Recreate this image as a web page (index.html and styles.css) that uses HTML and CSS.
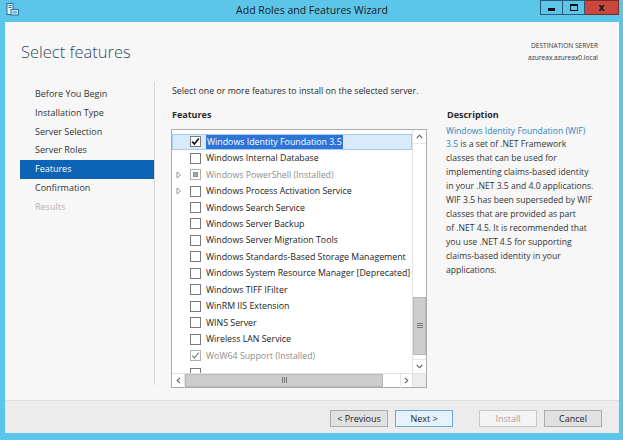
FILE: index.html
```html
<!DOCTYPE html>
<html>
<head>
<meta charset="utf-8">
<title>Add Roles and Features Wizard</title>
<link rel="stylesheet" href="styles.css">
</head>
<body>
<div class="window">
  <div class="titlebar">
    <div class="tb-left">
      <svg class="app-icon" width="13" height="13" viewBox="0 0 13 13">
        <rect x="1" y="0.5" width="6" height="11" fill="#e8f4fb" stroke="#2d6f9c"/>
        <rect x="2.5" y="2" width="3" height="1" fill="#2d6f9c"/>
        <rect x="2.5" y="4" width="3" height="1" fill="#2d6f9c"/>
        <rect x="5" y="6.5" width="7.5" height="5.5" fill="#dfeef8" stroke="#2d6f9c"/>
        <rect x="6.5" y="8" width="4.5" height="2.5" fill="#6fb3de"/>
      </svg>
    </div>
    <div class="tb-title">Add Roles and Features Wizard</div>
    <div class="tb-controls">
      <div class="ctl ctl-min"><span class="min-glyph"></span></div>
      <div class="ctl ctl-max"><span class="max-glyph"></span></div>
      <div class="ctl ctl-close">x</div>
    </div>
  </div>

  <div class="client">
    <div class="header">
      <h1 class="page-title">Select features</h1>
      <div class="dest">
        <div>DESTINATION SERVER</div>
        <div>azureax.azureax0.local</div>
      </div>
    </div>

    <div class="main">
      <nav class="steps">
        <div class="step">Before You Begin</div>
        <div class="step">Installation Type</div>
        <div class="step">Server Selection</div>
        <div class="step">Server Roles</div>
        <div class="step step-active">Features</div>
        <div class="step">Confirmation</div>
        <div class="step step-disabled">Results</div>
      </nav>

      <div class="content">
        <p class="intro">Select one or more features to install on the selected server.</p>
        <div class="columns">
          <div class="features">
            <div class="col-title">Features</div>
            <div class="listbox">
              <div class="rows">
                <div class="row row-selected"><span class="exp"></span><span class="cb"><svg width="9" height="9" viewBox="0 0 9 9"><path d="M1.2 4.6 L3.4 7 L7.8 1.6" fill="none" stroke="#111" stroke-width="1.6"/></svg></span><span class="label"><span class="sel-text">Windows Identity Foundation 3.5</span></span></div>
                <div class="row"><span class="exp"></span><span class="cb"></span><span class="label">Windows Internal Database</span></div>
                <div class="row row-installed"><span class="exp"><svg width="6" height="8" viewBox="0 0 6 8"><path d="M1 1 L4.5 4 L1 7 Z" fill="none" stroke="#9a9a9a" stroke-width="1"/></svg></span><span class="cb cb-partial"><span class="partial-fill"></span></span><span class="label">Windows PowerShell (Installed)</span></div>
                <div class="row"><span class="exp"><svg width="6" height="8" viewBox="0 0 6 8"><path d="M1 1 L4.5 4 L1 7 Z" fill="none" stroke="#9a9a9a" stroke-width="1"/></svg></span><span class="cb"></span><span class="label">Windows Process Activation Service</span></div>
                <div class="row"><span class="exp"></span><span class="cb"></span><span class="label">Windows Search Service</span></div>
                <div class="row"><span class="exp"></span><span class="cb"></span><span class="label">Windows Server Backup</span></div>
                <div class="row"><span class="exp"></span><span class="cb"></span><span class="label">Windows Server Migration Tools</span></div>
                <div class="row"><span class="exp"></span><span class="cb"></span><span class="label">Windows Standards-Based Storage Management</span></div>
                <div class="row"><span class="exp"></span><span class="cb"></span><span class="label">Windows System Resource Manager [Deprecated]</span></div>
                <div class="row"><span class="exp"></span><span class="cb"></span><span class="label">Windows TIFF IFilter</span></div>
                <div class="row"><span class="exp"></span><span class="cb"></span><span class="label">WinRM IIS Extension</span></div>
                <div class="row"><span class="exp"></span><span class="cb"></span><span class="label">WINS Server</span></div>
                <div class="row"><span class="exp"></span><span class="cb"></span><span class="label">Wireless LAN Service</span></div>
                <div class="row row-installed"><span class="exp"></span><span class="cb cb-installed"><svg width="9" height="9" viewBox="0 0 9 9"><path d="M1.2 4.6 L3.4 7 L7.8 1.6" fill="none" stroke="#8a8a8a" stroke-width="1.3"/></svg></span><span class="label">WoW64 Support (Installed)</span></div>
                <div class="row row-partial"><span class="exp"></span><span class="cb"></span></div>
              </div>
              <div class="vscroll">
                <div class="sb-btn sb-up"><svg width="7" height="5" viewBox="0 0 7 5"><path d="M0.8 4 L3.5 1.2 L6.2 4" fill="none" stroke="#606060" stroke-width="1.1"/></svg></div>
                <div class="v-track"><div class="v-thumb"><span class="grip-v"></span></div></div>
                <div class="sb-btn sb-down"><svg width="7" height="5" viewBox="0 0 7 5"><path d="M0.8 1 L3.5 3.8 L6.2 1" fill="none" stroke="#606060" stroke-width="1.1"/></svg></div>
              </div>
              <div class="hscroll">
                <div class="sb-btn sb-left"><svg width="5" height="7" viewBox="0 0 5 7"><path d="M4 0.8 L1.2 3.5 L4 6.2" fill="none" stroke="#606060" stroke-width="1.1"/></svg></div>
                <div class="h-thumb"><span class="grip-h"></span></div>
                <div class="h-track"></div>
                <div class="sb-btn sb-right"><svg width="5" height="7" viewBox="0 0 5 7"><path d="M1 0.8 L3.8 3.5 L1 6.2" fill="none" stroke="#606060" stroke-width="1.1"/></svg></div>
              </div>
              <div class="corner"></div>
            </div>
          </div>
          <div class="desc">
            <div class="col-title">Description</div>
            <p class="desc-text"><span class="desc-link">Windows Identity Foundation (WIF)<br>3.5</span> is a set of .NET Framework<br>classes that can be used for<br>implementing claims-based identity<br>in your .NET 3.5 and 4.0 applications.<br>WIF 3.5 has been superseded by WIF<br>classes that are provided as part<br>of .NET 4.5. It is recommended that<br>you use .NET 4.5 for supporting<br>claims-based identity in your<br>applications.</p>
          </div>
        </div>
      </div>
    </div>

    <div class="footer">
      <button class="btn">&lt; Previous</button>
      <button class="btn btn-default">Next &gt;</button>
      <button class="btn btn-disabled btn-install">Install</button>
      <button class="btn">Cancel</button>
    </div>
  </div>
</div>
</body>
</html>
```

FILE: styles.css
```css
* { box-sizing: border-box; }
html, body { margin: 0; padding: 0; }
body {
  width: 623px;
  height: 440px;
  overflow: hidden;
  font-family: "Open Sans", "Noto Sans", "DejaVu Sans", sans-serif;
  color: #2b2b2b;
  background: #5cc6ea;
}
.window {
  width: 623px;
  height: 440px;
  display: flex;
  flex-direction: column;
  padding: 0 4px 7px 5px;
  background: #5cc6ea;
}

/* title bar */
.titlebar {
  height: 22px;
  flex: none;
  display: grid;
  grid-template-columns: 1fr auto 1fr;
  align-items: start;
}
.tb-left { padding: 3px 0 0 1px; }
.app-icon { display: block; }
.tb-title {
  font-size: 10.5px;
  line-height: 20px;
  color: #1a1a1a;
}
.tb-controls {
  justify-self: end;
  display: flex;
  height: 15px;
}
.ctl {
  height: 15px;
  border: 1px solid #2a5a78;
  display: flex;
  align-items: center;
  justify-content: center;
}
.ctl-min { width: 23px; background: #5cc6ea; }
.ctl-max { width: 22px; background: #5cc6ea; border-left: none; }
.ctl-close {
  width: 34px;
  background: #c9473e;
  border-color: #7a2b26;
  border-left: none;
  font-family: "DejaVu Sans", sans-serif;
  font-weight: bold;
  font-size: 10px;
  line-height: 12px;
  color: #1a1a1a;
}
.min-glyph { width: 7px; height: 3px; background: #111; margin-top: 3px; }
.max-glyph { width: 8px; height: 7px; border: 1px solid #111; border-top-width: 2px; }

/* client */
.client {
  flex: 1;
  display: flex;
  flex-direction: column;
  background: #f7f7f7;
}
.header {
  height: 60px;
  flex: none;
  display: flex;
  justify-content: space-between;
  padding: 0 21px 0 16px;
}
.page-title {
  margin: 0;
  padding-top: 20px;
  font-size: 16.5px;
  line-height: 20px;
  font-weight: 300;
  color: #2f4d63;
}
.dest {
  padding-top: 18px;
  font-size: 6.6px;
  line-height: 12px;
  text-align: right;
  color: #333;
}

.main {
  flex: 1;
  display: flex;
  min-height: 0;
}
.steps {
  width: 150px;
  flex: none;
  padding: 3px 0 0 15px;
  border-right: 1px solid #d6d6d6;
  margin-bottom: 15px;
}
.step {
  height: 18.8px;
  line-height: 18.8px;
  padding-left: 15px;
  font-size: 9px;
  color: #333;
}
.step-active { background: #0d63b6; color: #fff; }
.step-disabled { color: #b5b5b5; }

.content {
  flex: 1;
  padding-left: 16px;
}
.intro {
  margin: 0;
  padding-top: 1.5px;
  font-size: 8.8px;
  line-height: 14px;
  padding-left: 1px;
}
.columns {
  display: flex;
  gap: 19px;
}
.col-title {
  margin-top: 10px;
  font-size: 9px;
  line-height: 14px;
  font-weight: 700;
  padding-left: 1px;
  margin-bottom: 7px;
}
.features { width: 256px; flex: none; }
.listbox {
  width: 256px;
  height: 259px;
  border: 1px solid #acacac;
  background: #fff;
  display: grid;
  grid-template-columns: 1fr 14px;
  grid-template-rows: 1fr 14px;
}
.rows {
  overflow: hidden;
  padding-top: 4px;
}
.row {
  height: 16.46px;
  display: flex;
  align-items: center;
  padding-left: 3px;
  font-size: 8.8px;
  color: #222;
  white-space: nowrap;
}
.row-selected {
  background: #d9eafa;
  border: 1px solid #a6cbef;
  padding-left: 2px;
}
.row-partial { align-items: flex-start; padding-top: 4px; }
.exp {
  width: 13px;
  flex: none;
  display: flex;
  align-items: center;
  padding-left: 1px;
}
.exp svg { display: block; }
.cb {
  width: 11px;
  height: 11px;
  flex: none;
  margin-left: 2px;
  border: 1px solid #7a7a7a;
  background: #fff;
  display: flex;
  align-items: center;
  justify-content: center;
}
.cb svg { display: block; }
.cb-installed { border-color: #b0b0b0; }
.cb-partial { border-color: #b0b0b0; }
.partial-fill { width: 5px; height: 5px; background: #a8a8a8; border: 1px solid #8c8c8c; }
.label { margin-left: 5px; }
.sel-text {
  background: #2d74d6;
  color: #fff;
  padding: 1px 1px;
}
.row-installed .label { color: #8d8d8d; }

.vscroll {
  display: flex;
  flex-direction: column;
  border-left: 1px solid #e2e2e2;
  background: #fff;
}
.sb-btn {
  height: 14px;
  flex: none;
  display: flex;
  align-items: center;
  justify-content: center;
}
.sb-btn svg { display: block; }
.sb-up { border-bottom: 1px solid #e6e6e6; }
.sb-down { border-top: 1px solid #e6e6e6; }
.v-track { flex: 1; }
.v-thumb {
  margin-top: 153px;
  height: 58px;
  background: #cdcdcd;
  border: 1px solid #b8b8b8;
  display: flex;
  align-items: center;
  justify-content: center;
}
.grip-v {
  width: 6px;
  height: 5px;
  border-top: 1px solid #777;
  border-bottom: 1px solid #777;
  background: linear-gradient(#777, #777) center / 100% 1px no-repeat;
}
.hscroll {
  display: flex;
  border-top: 1px solid #e2e2e2;
  background: #fff;
}
.sb-left { width: 13px; border-right: 1px solid #e6e6e6; }
.sb-right { width: 12px; border-left: 1px solid #e6e6e6; }
.h-thumb {
  width: 198px;
  background: #cdcdcd;
  border: 1px solid #b8b8b8;
  display: flex;
  align-items: center;
  justify-content: center;
}
.grip-h {
  width: 5px;
  height: 6px;
  border-left: 1px solid #777;
  border-right: 1px solid #777;
  background: linear-gradient(#777, #777) center / 1px 100% no-repeat;
}
.h-track { flex: 1; }
.corner { background: #ececec; border-left: 1px solid #e2e2e2; border-top: 1px solid #e2e2e2; }

.desc { width: 165px; flex: none; }
.desc .col-title { margin-bottom: 3px; }
.desc-text {
  margin: 0;
  font-size: 8.6px;
  line-height: 13.9px;
  color: #333;
  white-space: nowrap;
}
.desc-link { color: #2a85c0; }

/* footer */
.footer {
  height: 33px;
  flex: none;
  border-top: 1px solid #dedede;
  background: #ececec;
  display: flex;
  justify-content: flex-end;
  align-items: flex-start;
  padding: 9px 17px 0 0;
}
.btn {
  width: 58px;
  height: 17px;
  padding: 0;
  margin-left: 7px;
  font-family: "Open Sans", "Noto Sans", sans-serif;
  font-size: 9px;
  line-height: 15px;
  color: #222;
  background: #e1e1e1;
  border: 1px solid #acacac;
  border-radius: 0;
}
.btn-default { background: #e5f1fb; border-color: #6fa8dc; }
.btn-install { margin-left: 26px; }
.btn-disabled { background: #f4f4f4; border-color: #c8c8c8; color: #a3a3a3; }
```
